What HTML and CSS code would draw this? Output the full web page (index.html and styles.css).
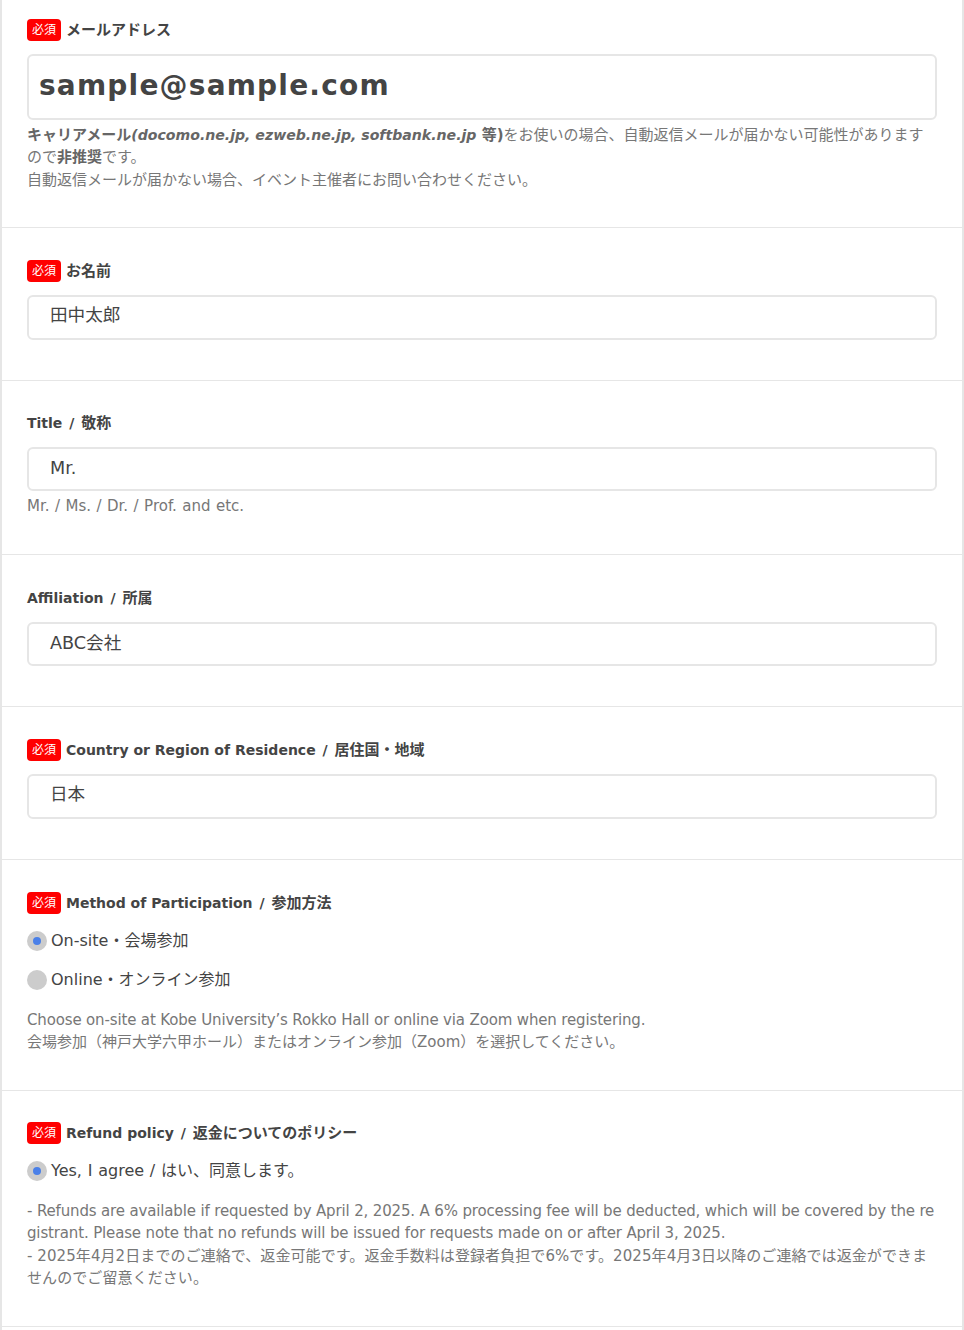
FILE: index.html
```html
<!DOCTYPE html>
<html lang="ja">
<head>
<meta charset="utf-8">
<title>Form</title>
<link rel="stylesheet" href="styles.css">
</head>
<body>
<main class="form">
  <section class="field first">
    <div class="label"><span class="req"><span class="req-text">必須</span></span><span class="label-text">メールアドレス</span></div>
    <div class="input email"><span class="input-text">sample@sample.com</span></div>
    <p class="note tight"><strong>キャリアメール<em class="en-em">(docomo.ne.jp, ezweb.ne.jp, softbank.ne.jp</em> 等)</strong>をお使いの場合、自動返信メールが届かない可能性がありますので<strong>非推奨</strong>です。<br>自動返信メールが届かない場合、イベント主催者にお問い合わせください。</p>
  </section>
  <section class="field s-name">
    <div class="label"><span class="req"><span class="req-text">必須</span></span><span class="label-text">お名前</span></div>
    <div class="input"><span class="input-text">田中太郎</span></div>
  </section>
  <section class="field s-title">
    <div class="label"><span class="label-text"><span class="en">Title</span><span class="sl"> / </span>敬称</span></div>
    <div class="input thin"><span class="input-text">Mr.</span></div>
    <p class="note tight wide-sp">Mr. / Ms. / Dr. / Prof. and etc.</p>
  </section>
  <section class="field s-aff">
    <div class="label"><span class="label-text"><span class="en">Affiliation</span><span class="sl"> / </span>所属</span></div>
    <div class="input thin"><span class="input-text">ABC会社</span></div>
  </section>
  <section class="field s-country">
    <div class="label"><span class="req"><span class="req-text">必須</span></span><span class="label-text"><span class="en">Country or Region of Residence</span><span class="sl"> / </span>居住国・地域</span></div>
    <div class="input"><span class="input-text">日本</span></div>
  </section>
  <section class="field s-method">
    <div class="label"><span class="req"><span class="req-text">必須</span></span><span class="label-text"><span class="en">Method of Participation</span><span class="sl"> / </span>参加方法</span></div>
    <div class="radio on"><span class="dot"></span><span class="radio-text">On-site・会場参加</span></div>
    <div class="radio"><span class="dot"></span><span class="radio-text">Online・オンライン参加</span></div>
    <p class="note"><span class="en-note">Choose on-site at Kobe University’s Rokko Hall or online via Zoom when registering.</span><br>会場参加（神戸大学六甲ホール）またはオンライン参加（Zoom）を選択してください。</p>
  </section>
  <section class="field s-refund">
    <div class="label"><span class="req"><span class="req-text">必須</span></span><span class="label-text"><span class="en">Refund policy</span><span class="sl"> / </span>返金についてのポリシー</span></div>
    <div class="radio on"><span class="dot"></span><span class="radio-text wide-sp">Yes, I agree / はい、同意します。</span></div>
    <p class="note"><span class="en-note">- Refunds are available if requested by April 2, 2025. A 6% processing fee will be deducted, which will be covered by the registrant. Please note that no refunds will be issued for requests made on or after April 3, 2025.</span><br><span class="ja-note">- 2025年4月2日までのご連絡で、返金可能です。返金手数料は登録者負担で6%です。2025年4月3日以降のご連絡では返金ができませんのでご留意ください。</span></p>
  </section>
</main>
</body>
</html>
```
FILE: styles.css
```css
* { box-sizing: border-box; }
html, body { margin: 0; padding: 0; background: #fff; }
body {
  height: 1330px;
  overflow: hidden;
  color: #444;
  font-family: "DejaVu Sans", "Noto Sans CJK JP", sans-serif;
}
.form {
  border-left: 2px solid #e6e6e6;
  border-right: 2px solid #e6e6e6;
  height: 1330px;
}
.field {
  padding: 32px 25px 0;
  border-bottom: 1px solid #e6e6e6;
}
.first { padding-top: 19px; height: 228px; }
.s-name { height: 153px; }
.s-title { height: 174px; }
.s-aff { height: 152px; }
.s-country { height: 153px; }
.s-method { height: 231px; }
.s-refund { height: 236px; padding-top: 31px; }
.label {
  display: flex;
  align-items: center;
  gap: 5px;
  height: 22px;
  font-size: 15px;
  font-weight: 700;
  color: #444;
}
.label-text { padding-bottom: 4px; }
.s-title .label { margin-top: -1px; }
.en { font-size: 14px; }
.sl { padding: 0 2px; font-size: 14px; }
.req {
  display: flex;
  align-items: center;
  justify-content: center;
  width: 34px;
  height: 22px;
  background: #f00;
  border-radius: 4px;
  color: #fff;
  font-size: 12px;
  font-weight: 400;
}
.req-text { padding-bottom: 4px; }
.input {
  display: flex;
  align-items: center;
  margin-top: 13px;
  height: 45px;
  padding: 0 21px;
  background: #fff;
  border: 2px solid #e6e6e6;
  border-radius: 6px;
  font-size: 17.6px;
  color: #444;
}
.input-text { padding-bottom: 8px; }
.input.thin { height: 44px; }
.input.thin .input-text { padding-bottom: 5px; }
.s-title .input.thin .input-text { padding-bottom: 3px; }
.input.email {
  height: 66px;
  padding: 0 10px;
  font-size: 28px;
  font-weight: 700;
  letter-spacing: 1.2px;
}
.input.email .input-text { padding-bottom: 3px; }
.note {
  margin: 18.6px 0 0;
  font-size: 15px;
  line-height: 22.5px;
  color: #777;
  word-break: break-all;
}
.note.tight { margin-top: 3.6px; }
.note strong { color: #666; }
.en-em { font-size: 14.1px; }
.en-note { letter-spacing: -0.15px; }
.ja-note { letter-spacing: 0.08px; }
.wide-sp { word-spacing: 0.7px; }
.radio {
  display: flex;
  align-items: center;
  gap: 4px;
  height: 20px;
  margin-top: 19px;
  font-size: 16px;
  color: #444;
}
.label + .radio { margin-top: 17px; }
.radio-text { padding-bottom: 4px; }
.dot {
  display: flex;
  align-items: center;
  justify-content: center;
  width: 20px;
  height: 20px;
  border-radius: 50%;
  background: #ccc;
}
.on .dot::after {
  content: "";
  width: 8px;
  height: 8px;
  border-radius: 50%;
  background: #4a80e8;
}
```
